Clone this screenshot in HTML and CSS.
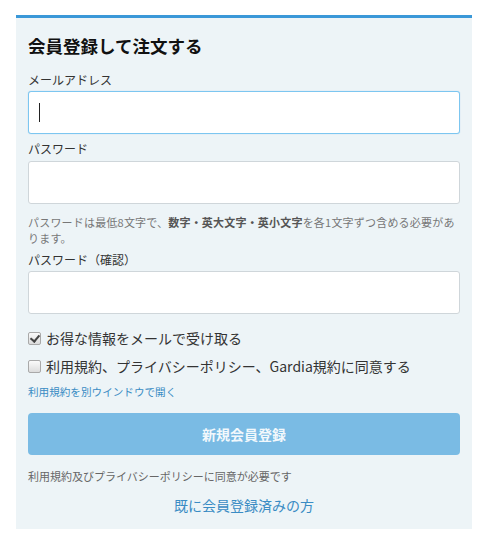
FILE: index.html
```html
<!DOCTYPE html>
<html lang="ja">
<head>
<meta charset="utf-8">
<title>会員登録して注文する</title>
<link rel="stylesheet" href="styles.css">
</head>
<body>
<section class="panel">
  <h2 class="title">会員登録して注文する</h2>

  <label class="label" for="email">メールアドレス</label>
  <div class="field">
    <input id="email" class="input input-focus" type="email">
    <span class="caret"></span>
  </div>

  <label class="label label-next" for="pw">パスワード</label>
  <div class="field">
    <input id="pw" class="input" type="password">
  </div>
  <p class="help">パスワードは最低8文字で、<b>数字・英大文字・英小文字</b>を各1文字ずつ含める必要があります。</p>

  <label class="label label-confirm" for="pw2">パスワード（確認）</label>
  <div class="field">
    <input id="pw2" class="input" type="password">
  </div>

  <div class="checks">
    <label class="check"><span class="box box-on"></span><span>お得な情報をメールで受け取る</span></label>
    <label class="check"><span class="box"></span><span>利用規約、プライバシーポリシー、Gardia規約に同意する</span></label>
  </div>

  <a class="terms-link" href="#">利用規約を別ウインドウで開く</a>

  <button class="submit" type="button">新規会員登録</button>

  <p class="note">利用規約及びプライバシーポリシーに同意が必要です</p>

  <div class="login-row"><a class="login-link" href="#">既に会員登録済みの方</a></div>
</section>
</body>
</html>
```

FILE: styles.css
```css
* { box-sizing: border-box; }

html, body {
  margin: 0;
  padding: 0;
  background: #ffffff;
}

body {
  font-family: "Noto Sans CJK JP", "Noto Sans", sans-serif;
  color: #333;
}

.panel {
  margin: 15px 0 0 16px;
  width: 456px;
  background: #edf4f7;
  border-top: 3px solid #3a98d8;
  padding: 16px 12px 14px;
  display: flex;
  flex-direction: column;
}

.title {
  margin: 0;
  font-size: 17.5px;
  line-height: 24px;
  font-weight: 700;
  color: #111;
}

.label {
  display: block;
  margin-top: 13px;
  margin-bottom: 2px;
  font-size: 12px;
  line-height: 18px;
  color: #333;
}

.label-next { margin-top: 6px; margin-bottom: 3px; }
.label-confirm { margin-top: 5px; margin-bottom: 2px; }

.field {
  position: relative;
}

.input {
  display: block;
  width: 100%;
  height: 43px;
  margin: 0;
  padding: 0 10px;
  border: 1px solid #cfd6da;
  border-radius: 3px;
  background: #fff;
  font-size: 14px;
  outline: none;
}

.input-focus {
  border-color: #7cc6f0;
  box-shadow: 0 0 1px rgba(102, 180, 235, 0.6);
}

.caret {
  position: absolute;
  left: 11px;
  top: 12px;
  width: 1px;
  height: 19px;
  background: #222;
}

.help {
  margin: 10px 0 0;
  font-size: 11px;
  letter-spacing: 0.2px;
  line-height: 16px;
  color: #777;
}

.help b {
  font-weight: 700;
  color: #555;
}

.checks {
  margin-top: 14px;
  display: flex;
  flex-direction: column;
  gap: 8px;
}

.check {
  display: flex;
  align-items: center;
  gap: 5px;
  font-size: 14px;
  line-height: 20px;
  color: #333;
}

.box {
  position: relative;
  flex: none;
  width: 13px;
  height: 13px;
  border: 1px solid #a9a9a9;
  border-radius: 2px;
  background: linear-gradient(#fafafa, #dcdcdc);
}

.box-on::after {
  content: "";
  position: absolute;
  left: 3px;
  top: 0px;
  width: 4px;
  height: 7px;
  border-right: 2px solid #444;
  border-bottom: 2px solid #444;
  transform: rotate(40deg);
}

.terms-link {
  margin-top: 8px;
  font-size: 10.6px;
  line-height: 16px;
  color: #3a8cc4;
  text-decoration: none;
  align-self: flex-start;
}

.submit {
  margin-top: 13px;
  height: 42px;
  width: 100%;
  border: none;
  border-radius: 4px;
  background: #7abbe4;
  color: rgba(255, 255, 255, 0.92);
  font-family: inherit;
  font-size: 14px;
  font-weight: 700;
}

.note {
  margin: 13px 0 0;
  font-size: 11px;
  line-height: 16px;
  color: #666;
}

.login-row {
  margin-top: 10px;
  text-align: center;
  line-height: 20px;
}

.login-link {
  font-size: 14px;
  color: #3a8cc4;
  text-decoration: none;
}
```
